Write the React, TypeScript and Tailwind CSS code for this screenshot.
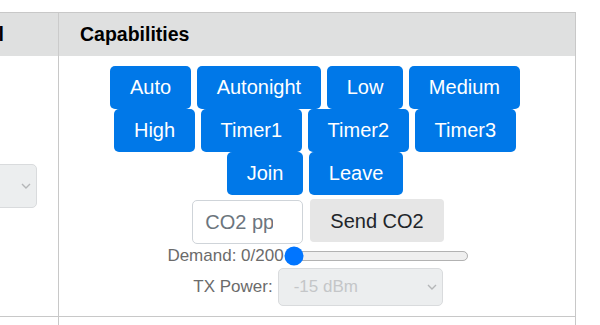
import type { ReactNode } from 'react';

const capabilities = ['Auto', 'Autonight', 'Low', 'Medium', 'High', 'Timer1', 'Timer2', 'Timer3', 'Join', 'Leave'];

function Chevron() {
  return (
    <svg width="10" height="6" viewBox="0 0 10 6" className="flex-none">
      <polyline points="1,1 5,5 9,1" fill="none" stroke="#b4b6b8" strokeWidth="1.4" />
    </svg>
  );
}

function FakeSelect({ className, children }: { className: string; children?: ReactNode }) {
  return (
    <div
      className={`flex flex-none items-center justify-between rounded-[5px] border border-[#d9dbdd] bg-[#eceeef] pr-[5px] text-[#c4c6c8] ${className}`}
    >
      <span>{children}</span>
      <Chevron />
    </div>
  );
}

export default function App() {
  return (
    <div className="h-[325px] w-[600px] overflow-hidden bg-white pt-[12px] font-['Liberation_Sans',Arial,sans-serif]">
      <div className="w-[576px] border-r border-t border-[#c8c8c8]">
        {/* header row */}
        <div className="flex h-[43px] bg-[#dfe0e0] text-[19.5px] font-bold text-black">
          <div className="flex w-[59px] flex-none items-center justify-end overflow-hidden whitespace-nowrap border-r border-[#cbcbcb] pr-[54px]">
            Control
          </div>
          <div className="flex flex-1 items-center pl-[21px]">Capabilities</div>
        </div>

        {/* body row */}
        <div className="flex h-[261px] border-b border-[#c8c8c8]">
          <div className="flex w-[59px] flex-none items-center justify-end overflow-hidden border-r border-[#c8c8c8] pr-[21px]">
            <FakeSelect className="h-[44px] w-[200px]" />
          </div>

          <div className="flex flex-1 flex-col items-center px-[22px] pt-[10px]">
            <div className="flex w-full justify-center pr-[4px]">
              <div className="flex w-[440px] flex-wrap justify-center gap-x-[5.5px]">
                {capabilities.map((c) => (
                  <button
                    key={c}
                    className="h-[43px] rounded-[5px] bg-[#0078e8] px-5 pb-px text-[20px] text-white"
                  >
                    {c}
                  </button>
                ))}
              </div>
            </div>

            <div className="flex w-full flex-col items-center pl-[2px]">
              <div className="mt-[4px] flex items-start gap-[7px]">
                <input
                  placeholder="CO2 ppm"
                  className="mt-[1px] h-[44px] w-[111px] rounded-[5px] border border-[#cfd4d9] bg-white pl-[12px] pr-[29px] text-[20px] text-[#212529] placeholder:text-[#6c757d]"
                />
                <button className="h-[43px] rounded-[4px] bg-[#e6e6e6] px-5 text-[20px] text-[#212529]">
                  Send CO2
                </button>
              </div>

              <div className="flex h-[24px] items-center text-[17px] text-[#6b6b6b]">
                <span>Demand: 0/200</span>
                <input
                  type="range"
                  min={0}
                  max={200}
                  defaultValue={0}
                  className="w-[148px] [zoom:1.25]"
                />
              </div>

              <div className="flex h-[38px] items-center gap-[5px] text-[17px]">
                <span className="text-[#6b6b6b]">TX Power:</span>
                <FakeSelect className="h-[38px] w-[165px] pl-[15px]">-15 dBm</FakeSelect>
              </div>
            </div>
          </div>
        </div>

        {/* next row (cut off) */}
        <div className="flex h-[20px]">
          <div className="w-[59px] flex-none border-r border-[#c8c8c8]" />
          <div className="flex-1" />
        </div>
      </div>
    </div>
  );
}
